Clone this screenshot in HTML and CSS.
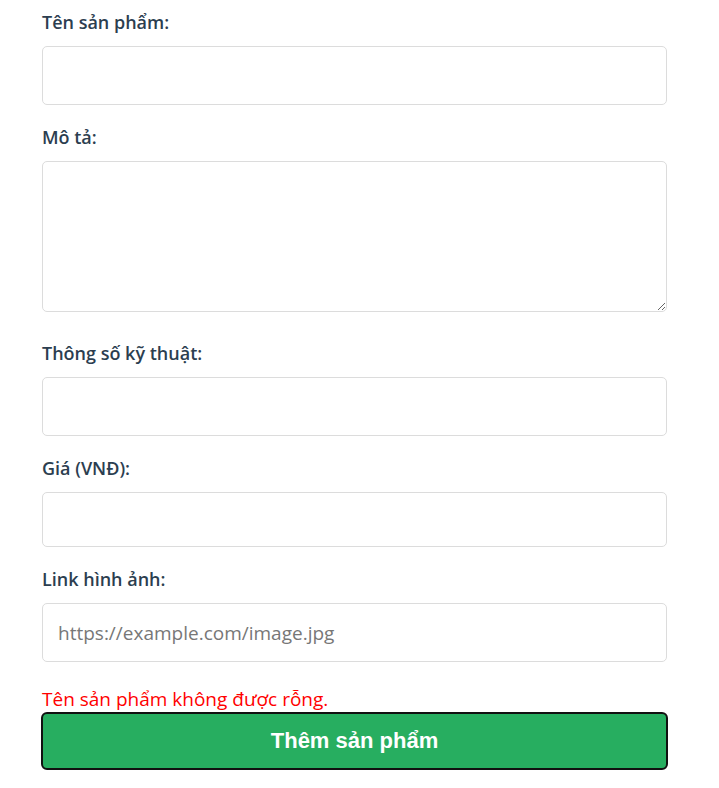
FILE: index.html
```html
<!DOCTYPE html>
<html lang="vi">
<head>
<meta charset="utf-8">
<link rel="stylesheet" href="styles.css">
</head>
<body>
<form class="product-form">
  <label class="field-label" for="name">Tên sản phẩm:</label>
  <input class="field-input" id="name" type="text">

  <label class="field-label" for="desc">Mô tả:</label>
  <textarea class="field-textarea" id="desc"></textarea>

  <label class="field-label" for="spec">Thông số kỹ thuật:</label>
  <input class="field-input" id="spec" type="text">

  <label class="field-label" for="price">Giá (VNĐ):</label>
  <input class="field-input field-number" id="price" type="number">

  <label class="field-label" for="img">Link hình ảnh:</label>
  <input class="field-input" id="img" type="text" placeholder="https://example.com/image.jpg">

  <p class="error-text">Tên sản phẩm không được rỗng.</p>
  <button class="submit-btn" type="button">Thêm sản phẩm</button>
</form>
</body>
</html>
```
FILE: styles.css
```css
html, body {
  margin: 0;
  padding: 0;
  background: #ffffff;
}

body {
  font-family: "Open Sans", "Noto Sans", sans-serif;
  color: #2c3e50;
}

.product-form {
  width: 625px;
  margin: 0 0 0 42px;
  padding-top: 10px;
  display: flex;
  flex-direction: column;
}

.field-label {
  display: block;
  font-size: 18px;
  line-height: 24px;
  font-weight: 600;
  color: #2c3e50;
  margin-bottom: 12px;
}

.field-input,
.field-textarea {
  box-sizing: border-box;
  width: 100%;
  border: 1px solid #dcdcdc;
  border-radius: 5px;
  background: #ffffff;
  font-family: "Open Sans", "Noto Sans", sans-serif;
  font-size: 19px;
  color: #333;
  padding: 0 15px;
  margin: 0 0 20px 0;
  outline: none;
}

.field-input {
  height: 59px;
}

.field-number {
  height: 55px;
}

.field-input::placeholder {
  color: #777777;
}

.field-textarea {
  display: block;
  height: 151px;
  margin-bottom: 29px;
  resize: vertical;
}

.error-text {
  margin: 5px 0 0 0;
  font-size: 19px;
  line-height: 25px;
  color: #ff0000;
}

.submit-btn {
  box-sizing: border-box;
  width: 627px;
  margin-left: -1px;
  height: 58px;
  background: #27ae60;
  color: #ffffff;
  border: 2px solid #111111;
  border-radius: 6px;
  font-family: "Liberation Sans", Arial, sans-serif;
  font-weight: 700;
  font-size: 22px;
}
```
